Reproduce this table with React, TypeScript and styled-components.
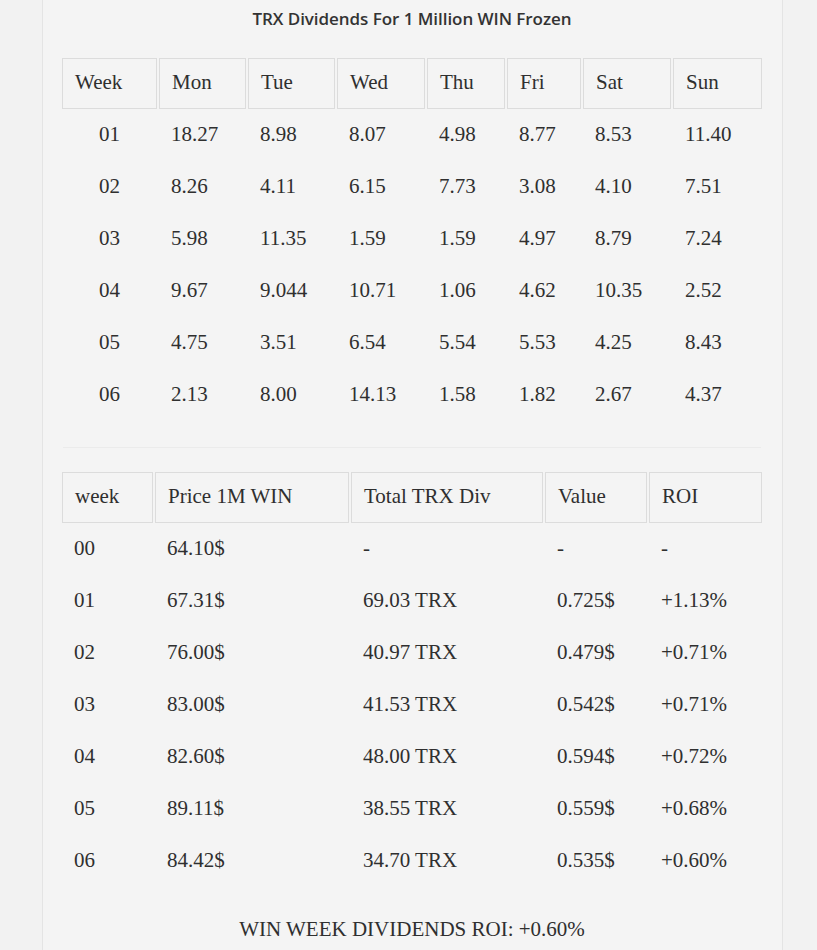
import React from "react";
import styled, { createGlobalStyle } from "styled-components";

const GlobalStyle = createGlobalStyle`
  *, *::before, *::after { box-sizing: border-box; }
  html, body { margin: 0; padding: 0; background: #f2f2f2; }
  body { font-family: "Liberation Serif", "Times New Roman", serif; color: #333; }
`;

const Panel = styled.div`
  margin-left: 42px;
  width: 741px;
  min-height: 950px;
  background: #f4f4f4;
  border-left: 1px solid #e4e4e4;
  border-right: 1px solid #e4e4e4;
  padding: 7px 18px 0 17px;
  display: flex;
  flex-direction: column;
`;

const Title = styled.h2`
  margin: 0 0 25px;
  font-family: "Open Sans", "Noto Sans", sans-serif;
  font-weight: 600;
  font-size: 17px;
  line-height: 24px;
  color: #333;
  text-align: center;
  letter-spacing: -0.05px;
`;

const Table = styled.table`
  width: 704px;
  table-layout: fixed;
  border-collapse: separate;
  border-spacing: 2px;
  font-size: 21px;
  color: #2f2f2f;
`;

const HeadCell = styled.th<{ $w: number }>`
  width: ${(p) => p.$w}px;
  height: 51px;
  border: 1px solid #dcdcdc;
  padding: 0 12px 4px;
  font-weight: 400;
  text-align: left;
  vertical-align: middle;
  line-height: 24px;
  white-space: nowrap;
`;

const Cell = styled.td<{ $center?: boolean }>`
  height: 50px;
  padding: 0 12px 5px;
  text-align: ${(p) => (p.$center ? "center" : "left")};
  vertical-align: middle;
  line-height: 24px;
  white-space: nowrap;
`;

const Separator = styled.hr`
  margin: 24px 3px 22px;
  border: none;
  border-top: 1px solid #ebebeb;
  height: 0;
`;

const Footer = styled.p`
  margin: 28px 0 0;
  text-align: center;
  font-size: 21px;
  line-height: 24px;
  color: #2f2f2f;
`;

const dayCols = [
  { label: "Week", w: 95 },
  { label: "Mon", w: 87 },
  { label: "Tue", w: 87 },
  { label: "Wed", w: 88 },
  { label: "Thu", w: 78 },
  { label: "Fri", w: 74 },
  { label: "Sat", w: 88 },
  { label: "Sun", w: 89 },
];

const dayRows = [
  ["01", "18.27", "8.98", "8.07", "4.98", "8.77", "8.53", "11.40"],
  ["02", "8.26", "4.11", "6.15", "7.73", "3.08", "4.10", "7.51"],
  ["03", "5.98", "11.35", "1.59", "1.59", "4.97", "8.79", "7.24"],
  ["04", "9.67", "9.044", "10.71", "1.06", "4.62", "10.35", "2.52"],
  ["05", "4.75", "3.51", "6.54", "5.54", "5.53", "4.25", "8.43"],
  ["06", "2.13", "8.00", "14.13", "1.58", "1.82", "2.67", "4.37"],
];

const roiCols = [
  { label: "week", w: 91 },
  { label: "Price 1M WIN", w: 194 },
  { label: "Total TRX Div", w: 192 },
  { label: "Value", w: 102 },
  { label: "ROI", w: 113 },
];

const roiRows = [
  ["00", "64.10$", "-", "-", "-"],
  ["01", "67.31$", "69.03 TRX", "0.725$", "+1.13%"],
  ["02", "76.00$", "40.97 TRX", "0.479$", "+0.71%"],
  ["03", "83.00$", "41.53 TRX", "0.542$", "+0.71%"],
  ["04", "82.60$", "48.00 TRX", "0.594$", "+0.72%"],
  ["05", "89.11$", "38.55 TRX", "0.559$", "+0.68%"],
  ["06", "84.42$", "34.70 TRX", "0.535$", "+0.60%"],
];

export default function App() {
  return (
    <>
      <GlobalStyle />
      <Panel>
        <Title>TRX Dividends For 1 Million WIN Frozen</Title>
        <Table>
          <thead>
            <tr>
              {dayCols.map((c) => (
                <HeadCell key={c.label} $w={c.w}>
                  {c.label}
                </HeadCell>
              ))}
            </tr>
          </thead>
          <tbody>
            {dayRows.map((r) => (
              <tr key={r[0]}>
                {r.map((v, i) => (
                  <Cell key={i} $center={i === 0}>
                    {v}
                  </Cell>
                ))}
              </tr>
            ))}
          </tbody>
        </Table>
        <Separator />
        <Table>
          <thead>
            <tr>
              {roiCols.map((c) => (
                <HeadCell key={c.label} $w={c.w}>
                  {c.label}
                </HeadCell>
              ))}
            </tr>
          </thead>
          <tbody>
            {roiRows.map((r) => (
              <tr key={r[0]}>
                {r.map((v, i) => (
                  <Cell key={i}>{v}</Cell>
                ))}
              </tr>
            ))}
          </tbody>
        </Table>
        <Footer>WIN WEEK DIVIDENDS ROI: +0.60%</Footer>
      </Panel>
    </>
  );
}
